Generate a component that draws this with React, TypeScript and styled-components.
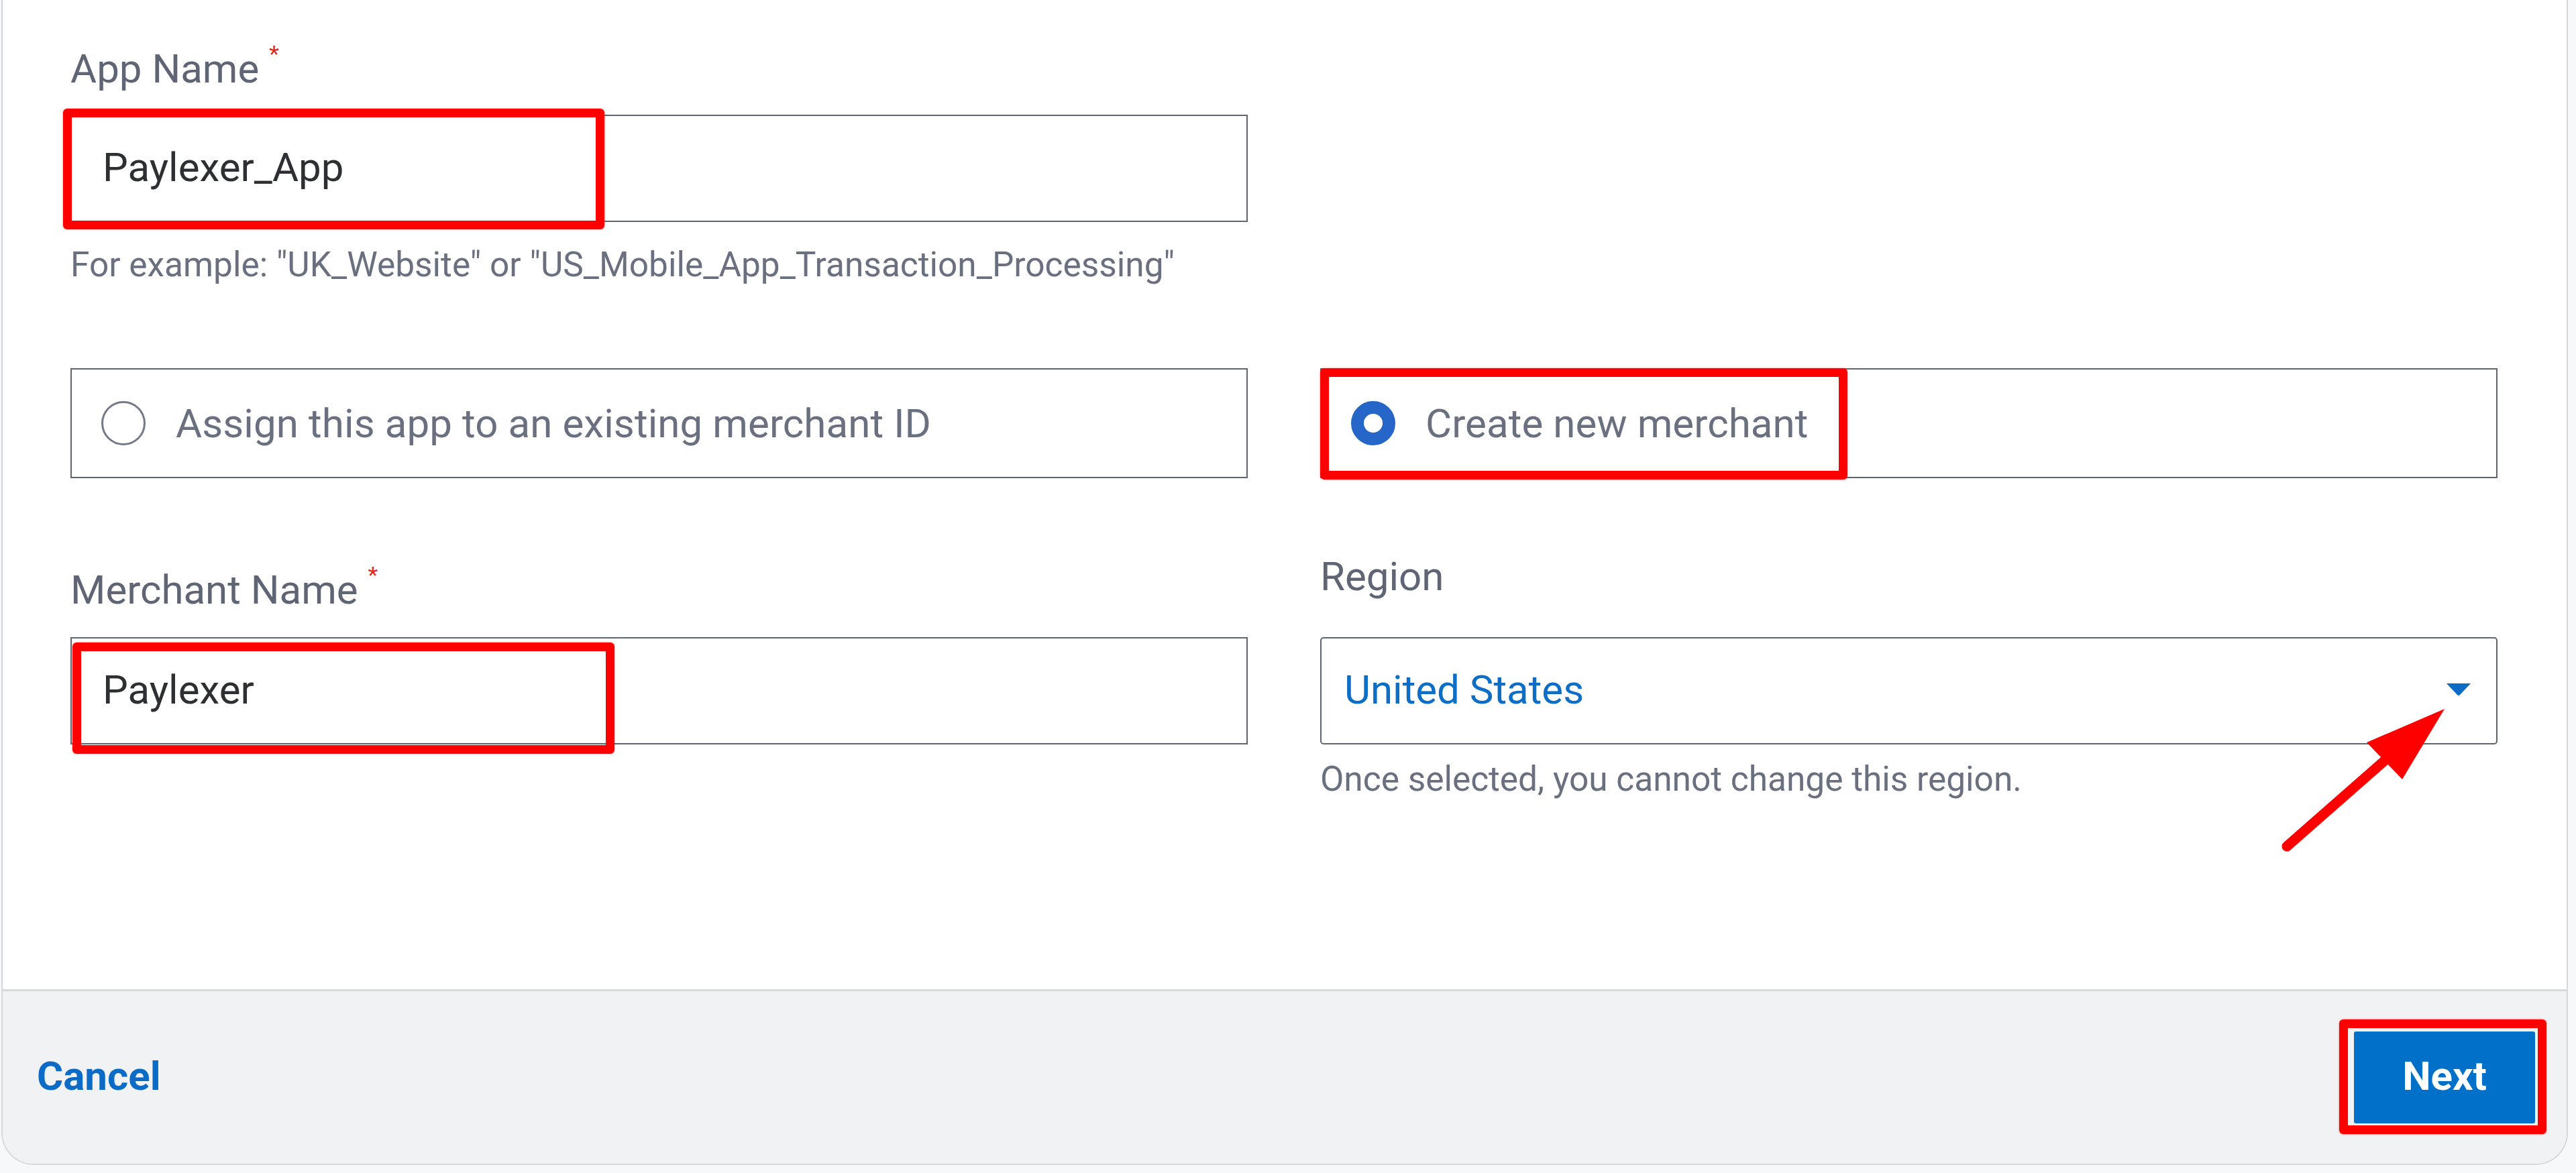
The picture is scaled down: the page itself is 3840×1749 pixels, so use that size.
import React from "react";
import styled, { createGlobalStyle } from "styled-components";

const GlobalStyle = createGlobalStyle`
  html, body {
    margin: 0;
    padding: 0;
    background: #f7f8f9;
  }
  body {
    font-family: Roboto, "Liberation Sans", Arial, sans-serif;
  }
  *, *::before, *::after {
    box-sizing: border-box;
  }
`;

const Page = styled.div`
  padding: 0 12px 12px 2px;
`;

const Card = styled.section`
  background: #ffffff;
  border: 2px solid #d4d7db;
  border-top: none;
  border-radius: 0 0 48px 48px;
  overflow: hidden;
`;

const Body = styled.div`
  position: relative;
  display: flex;
  flex-direction: column;
  padding: 47px 103px 282px 101px;
`;

const TwoCol = styled.div<{ $mt?: number }>`
  display: grid;
  grid-template-columns: 1fr 1fr;
  column-gap: 108px;
  align-items: start;
  margin-top: ${(p) => p.$mt ?? 0}px;
`;

const Field = styled.div`
  display: flex;
  flex-direction: column;
`;

const Label = styled.label<{ $required?: boolean }>`
  display: flex;
  align-items: flex-start;
  padding-top: ${(p) => (p.$required ? 20 : 0)}px;
  font-size: 60px;
  line-height: 72px;
  color: #5f6575;
`;

const Asterisk = styled.span`
  font-size: 34px;
  line-height: 34px;
  color: #e0281c;
  margin: -4px 0 0 15px;
`;

const ControlWrap = styled.div<{ $mt: number }>`
  position: relative;
  margin-top: ${(p) => p.$mt}px;
`;

const TextInput = styled.input`
  display: block;
  width: 100%;
  height: 160px;
  border: 2px solid #5e6472;
  border-radius: 0;
  padding: 0 46px 4px;
  background: #ffffff;
  font-family: Roboto, "Liberation Sans", Arial, sans-serif;
  font-size: 60px;
  color: #2d2f33;
  outline: none;
`;

const Helper = styled.p<{ $mt: number }>`
  margin: ${(p) => p.$mt}px 0 0;
  font-size: 51.4px;
  line-height: 62px;
  color: #6b7080;
`;

const Option = styled.label`
  position: relative;
  display: flex;
  align-items: center;
  gap: 45px;
  height: 164px;
  padding-left: 44px;
  border: 2px solid #5e6472;
  background: #ffffff;
  font-size: 60px;
  letter-spacing: 0.1px;
  color: #6b7080;
`;

const RadioMark = styled.span<{ $checked: boolean }>`
  flex: none;
  width: 66px;
  height: 66px;
  border-radius: 50%;
  background: #ffffff;
  border: ${(p) => (p.$checked ? "19px solid #2566c8" : "3px solid #737989")};
`;

const Select = styled.div`
  display: flex;
  align-items: center;
  justify-content: space-between;
  height: 160px;
  padding: 0 37px 4px 34px;
  border: 2px solid #5e6472;
  border-radius: 5px;
  background: #ffffff;
  font-size: 60px;
  color: #0d6ec7;
`;

const Caret = styled.svg`
  flex: none;
  width: 38px;
  height: 20px;
`;

const Highlight = styled.span<{ $top: number; $left: number; $w: number; $h: number }>`
  position: absolute;
  top: ${(p) => p.$top}px;
  left: ${(p) => p.$left}px;
  width: ${(p) => p.$w}px;
  height: ${(p) => p.$h}px;
  border: 13px solid #ff0000;
  border-radius: 6px;
  box-shadow: 0 0 3px rgba(255, 0, 0, 0.45);
  pointer-events: none;
`;

const Pointer = styled.svg`
  position: absolute;
  left: 3393px;
  top: 1047px;
  width: 260px;
  height: 230px;
  overflow: visible;
  pointer-events: none;
`;

const Footer = styled.footer`
  display: flex;
  align-items: center;
  justify-content: space-between;
  height: 260px;
  padding: 0 47px 0 51px;
  border-top: 3px solid #d6d9dd;
  background: #f1f2f4;
`;

const LinkButton = styled.button`
  padding: 0 0 4px;
  border: none;
  background: none;
  font-family: Roboto, "Liberation Sans", Arial, sans-serif;
  font-weight: 700;
  font-size: 60px;
  color: #0b6bc6;
  cursor: pointer;
`;

const ButtonWrap = styled.div`
  position: relative;
`;

const PrimaryButton = styled.button`
  display: block;
  width: 270px;
  height: 137px;
  padding: 0 0 4px;
  border: none;
  border-radius: 3px;
  background: #0070c8;
  font-family: Roboto, "Liberation Sans", Arial, sans-serif;
  font-weight: 700;
  font-size: 60px;
  color: #ffffff;
  cursor: pointer;
`;

export default function App() {
  return (
    <>
      <GlobalStyle />
      <Page>
        <Card>
          <Body>
            <TwoCol>
              <Field>
                <Label $required>
                  App Name<Asterisk>*</Asterisk>
                </Label>
                <ControlWrap $mt={32}>
                  <TextInput defaultValue="Paylexer_App" readOnly />
                  <Highlight $top={-9} $left={-11} $w={807} $h={180} />
                </ControlWrap>
                <Helper $mt={33}>
                  For example: "UK_Website" or "US_Mobile_App_Transaction_Processing"
                </Helper>
              </Field>
            </TwoCol>

            <TwoCol $mt={123}>
              <Option>
                <RadioMark $checked={false} />
                Assign this app to an existing merchant ID
              </Option>
              <Option>
                <RadioMark $checked />
                Create new merchant
                <Highlight $top={-2} $left={-2} $w={786} $h={166} />
              </Option>
            </TwoCol>

            <TwoCol $mt={111}>
              <Field>
                <Label $required>
                  Merchant Name<Asterisk>*</Asterisk>
                </Label>
              </Field>
              <Field>
                <Label>Region</Label>
              </Field>
              <ControlWrap $mt={34}>
                <TextInput defaultValue="Paylexer" readOnly />
                <Highlight $top={8} $left={3} $w={808} $h={166} />
              </ControlWrap>
              <Field>
                <ControlWrap $mt={34}>
                  <Select>
                    United States
                    <Caret viewBox="0 0 38 20">
                      <path d="M1 1 H37 L21 18 Q19 20 17 18 Z" fill="#0b6bc5" />
                    </Caret>
                  </Select>
                </ControlWrap>
                <Helper $mt={21}>Once selected, you cannot change this region.</Helper>
              </Field>
            </TwoCol>

            <Pointer viewBox="0 0 260 230">
              <line
                x1="12"
                y1="215"
                x2="168"
                y2="78"
                stroke="#ff0000"
                strokeWidth="15"
                strokeLinecap="round"
              />
              <polygon points="247,10 131,60 184,115" fill="#ff0000" />
            </Pointer>
          </Body>

          <Footer>
            <LinkButton type="button">Cancel</LinkButton>
            <ButtonWrap>
              <PrimaryButton type="button">Next</PrimaryButton>
              <Highlight $top={-18} $left={-22} $w={309} $h={171} />
            </ButtonWrap>
          </Footer>
        </Card>
      </Page>
    </>
  );
}
